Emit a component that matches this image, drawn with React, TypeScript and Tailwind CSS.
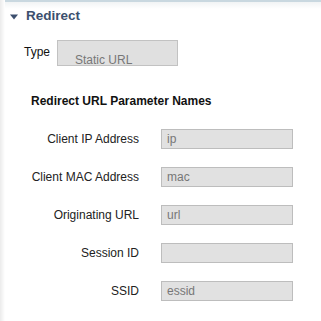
import React from "react";

const rows: { label: string; value: string }[] = [
  { label: "Client IP Address", value: "ip" },
  { label: "Client MAC Address", value: "mac" },
  { label: "Originating URL", value: "url" },
  { label: "Session ID", value: "" },
  { label: "SSID", value: "essid" },
];

export default function App() {
  return (
    <div
      className="w-[321px] h-[321px] bg-white flex overflow-hidden"
      style={{ fontFamily: '"Liberation Sans", Arial, sans-serif' }}
    >
      <div className="w-[5px] h-full bg-[linear-gradient(to_right,#ebebeb,#ffffff)]" />
      <div className="flex-1 flex flex-col border-t-2 border-[#c9d8e0] bg-[linear-gradient(to_bottom,#f1f4f5,#ffffff_7px)]">
        <div className="flex items-center mt-[6px] pl-[5px] h-[16px]">
          <svg width="8" height="6" viewBox="0 0 8 6" className="mt-[1px]">
            <polygon points="0,0.5 8,0.5 4,5.5" fill="#3c4f6e" />
          </svg>
          <span className="ml-[8px] text-[13.5px] leading-[16px] font-bold text-[#3c4f6e]">
            Redirect
          </span>
        </div>

        <div className="flex items-start mt-[16px] pl-[19px]">
          <span className="mt-[5px] text-[12px] leading-[14px] text-[#111]">Type</span>
          <div className="ml-[7px] w-[121px] h-[26px] box-border border border-[#c2c2c2] bg-[#e0e0e0] pl-[17px] pt-[13px] text-[12px] leading-[12px] text-[#777]">
            Static URL
          </div>
        </div>

        <div className="mt-[28px] pl-[26px] text-[12px] leading-[14px] font-bold text-[#111]">
          Redirect URL Parameter Names
        </div>

        <div className="flex flex-col gap-[18px] mt-[21px]">
          {rows.map((r) => (
            <div key={r.label} className="flex items-center">
              <span className="w-[134px] text-right text-[12px] leading-[14px] text-[#222]">
                {r.label}
              </span>
              <div className="ml-[22px] w-[132px] h-[20px] box-border border border-[#bdbdbd] bg-[#e1e1e1] pl-[5px] flex items-center text-[12px] leading-[14px] text-[#777]">
                {r.value}
              </div>
            </div>
          ))}
        </div>
      </div>
    </div>
  );
}
